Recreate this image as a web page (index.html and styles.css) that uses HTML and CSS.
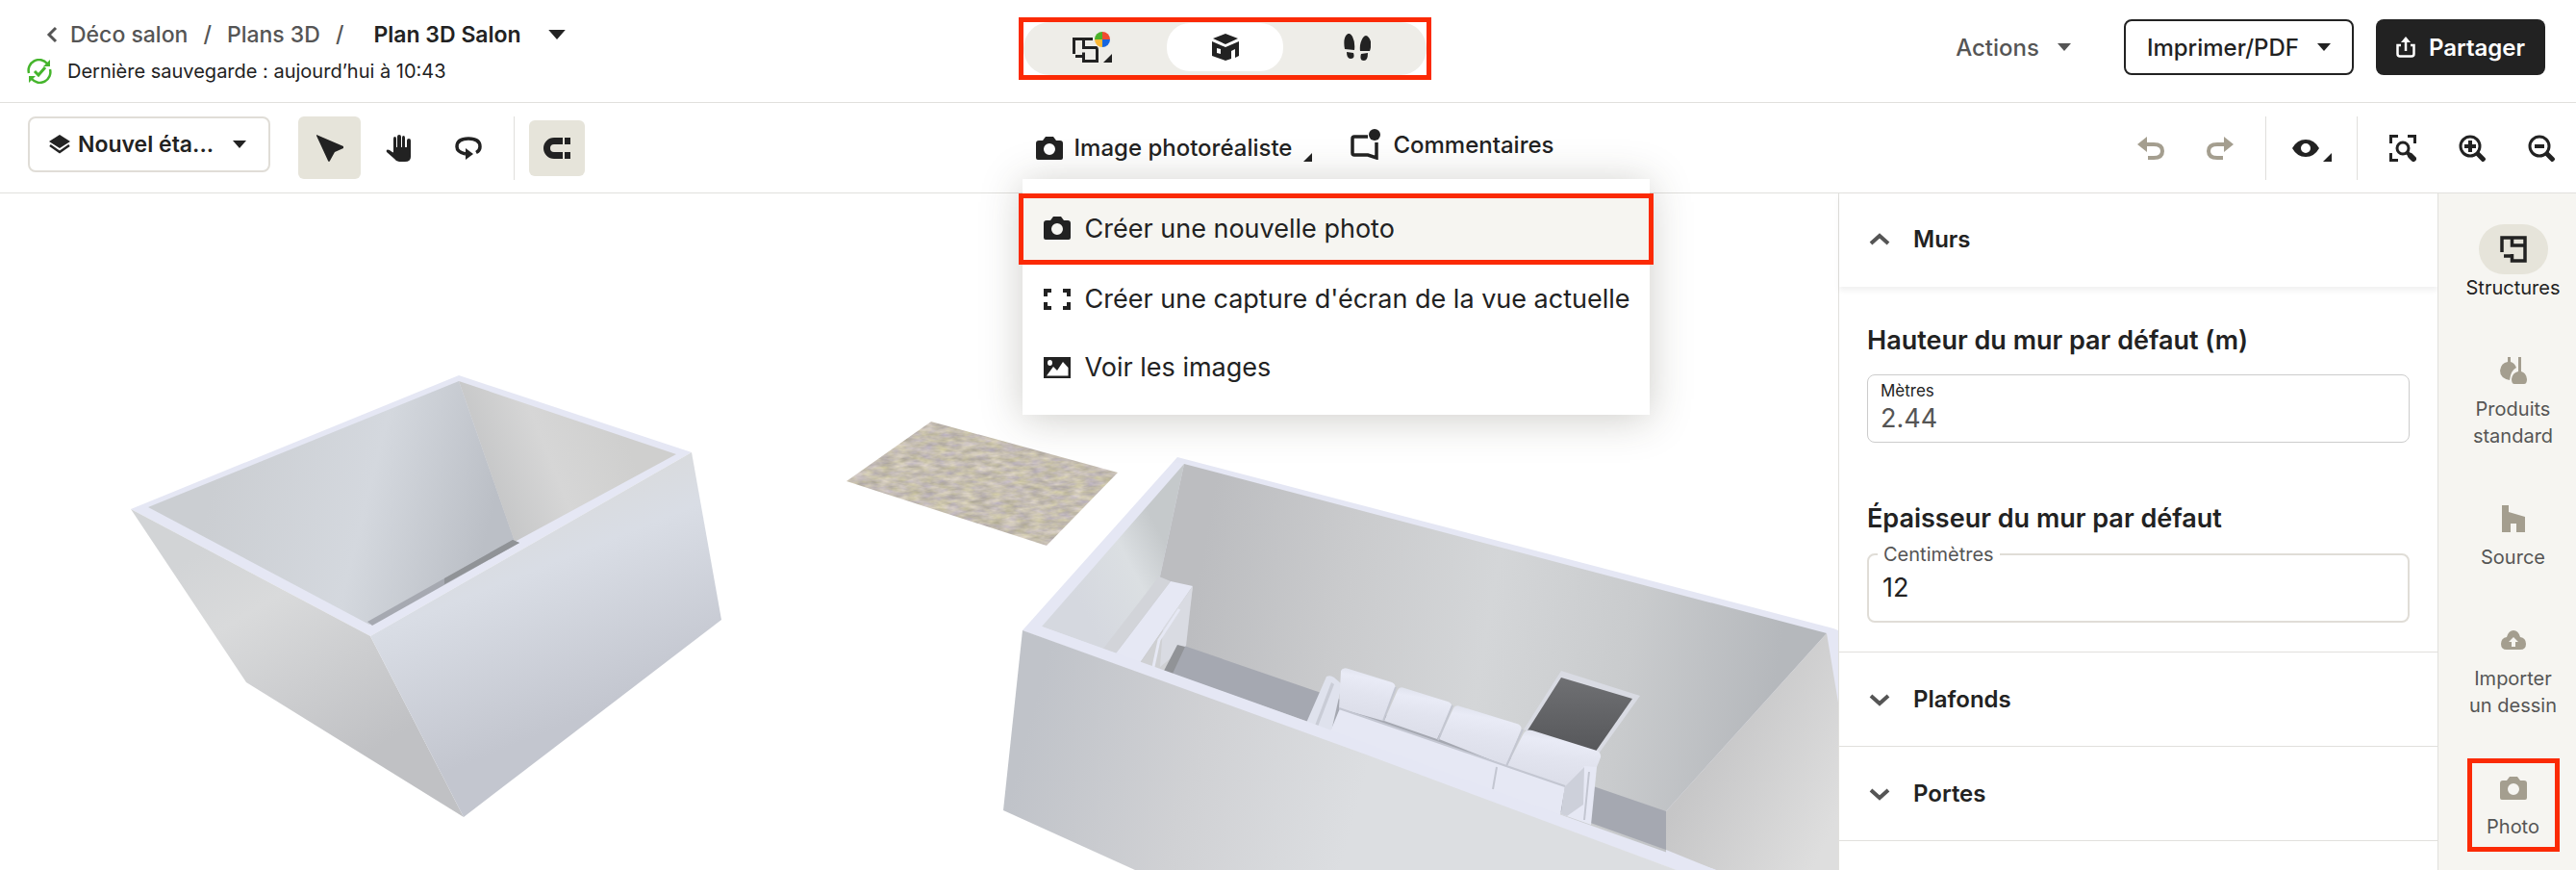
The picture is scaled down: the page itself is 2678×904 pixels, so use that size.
FILE: index.html
```html
<!DOCTYPE html>
<html lang="fr">

<head>
  <meta charset="UTF-8">
  <meta name="viewport" content="width=device-width, initial-scale=1.0">
  <title>Plan 3D Salon</title>
  <link rel="stylesheet" href="styles.css">
</head>

<body>
  <!-- icons -->
  <svg class="sprite" aria-hidden="true">
    <symbol id="i-caret" viewBox="0 0 14 8"><path d="M0 0h14L7 8z"/></symbol>
    <symbol id="i-corner" viewBox="0 0 9 9"><path d="M9 0v9H0z"/></symbol>
    <symbol id="i-back" viewBox="0 0 12 18"><path d="M10 2L3 9l7 7" fill="none" stroke="currentColor" stroke-width="3"/></symbol>
    <symbol id="i-chevron" viewBox="0 0 22 14"><path d="M2 3l9 8 9-8" fill="none" stroke="currentColor" stroke-width="4"/></symbol>
    <symbol id="i-camera" viewBox="0 0 28 24"><path fill-rule="evenodd" d="M10 0h8l3 4h4q3 0 3 3v15q0 2-2 2H2q-2 0-2-2V7q0-3 3-3h4zM14 7a6 6 0 1 0 0 12 6 6 0 1 0 0-12z"/></symbol>
    <symbol id="i-frame" viewBox="0 0 28 22"><path d="M0 0h8v4H4v4H0zM20 0h8v8h-4V4h-4zM0 14h4v4h4v4H0zM24 14h4v8h-8v-4h4z"/></symbol>
    <symbol id="i-picture" viewBox="0 0 28 22"><path fill-rule="evenodd" d="M0 0h28v22H0zM3 19.500h22.500V11L20 5l-6 9-4-4zM6.500 3a2.500 3 0 1 0 0 6 2.500 3 0 1 0 0-6z"/></symbol>
    <symbol id="i-plan" viewBox="0 0 28 28"><path fill="none" stroke="currentColor" stroke-width="3.500" d="M2 17V2h24v24H12.500v-7M4 21h8.500M12.500 2v8h14"/></symbol>
    <symbol id="i-plan-color" viewBox="0 0 42 32">
      <path fill="none" stroke="currentColor" stroke-width="3" d="M1.500 23V7.500H21M11.500 8v8.500h13q1 0 1 3v11h-14v-5M3 25.500h8.500v-4"/>
      <path fill="#4cb22b" d="M31 8V0a8 8 0 0 0-8 8z"/>
      <path fill="#f04b30" d="M31 8h8a8 8 0 0 0-8-8z"/>
      <path fill="#1766e0" d="M31 8v8a8 8 0 0 0 8-8z"/>
      <path fill="#fdb935" d="M31 8h-8a8 8 0 0 0 8 8z"/>
      <path d="M41 23v9h-9z"/>
    </symbol>
    <symbol id="i-cube" viewBox="0 0 28 28">
      <path d="M14 0l13 5-13 6L1 5z"/>
      <path fill-rule="evenodd" d="M0 8l14 6 14-6v15l-4 2v-9l-4 2v8l-6 2-14-5zM5 15v5l4 1v-5z"/>
    </symbol>
    <symbol id="i-feet" viewBox="0 0 28 28">
      <path d="M1 16Q-1 5 3 1q3-3 6 2 3 6 2 14zM3 19l7 1q2 6-3 6-4 0-4-7zM17 18q-1-8 3-14 3-4 6 0 4 5 1 14zM18 21l7-1q0 8-4 8-5 0-3-7z"/>
    </symbol>
    <symbol id="i-share" viewBox="0 0 20 22"><path fill="none" stroke="currentColor" stroke-width="2.500" d="M5 9H1.500v9q0 2.500 2.500 2.500h12q2.500 0 2.500-2.500V9H15M10 15V4"/><path d="M10 0l5 6H5z"/></symbol>
    <symbol id="i-sync" viewBox="0 0 26 26">
      <path fill="none" stroke="currentColor" stroke-width="2.500" d="M2 15A11 11 0 0 1 21 5M24 11A11 11 0 0 1 5 21"/>
      <path d="M24 1v7h-7zM2 25v-7h7z"/>
      <path fill="none" stroke="currentColor" stroke-width="3" d="M8 13l4 4 7-8"/>
    </symbol>
    <symbol id="i-layers" viewBox="0 0 22 20"><path d="M11 0l11 7-11 7L0 7z"/><path fill="none" stroke="currentColor" stroke-width="2.500" d="M1 11l10 7 10-7"/></symbol>
    <symbol id="i-cursor" viewBox="0 0 28 28"><path d="M0 0l28 12q1 1 0 2l-9 4-5 9q-1 2-2 0L0 1z"/></symbol>
    <symbol id="i-hand" viewBox="0 0 28 28">
      <path d="M8 4q0-2 1.500-2T11 4v9h1V2q0-2 2-2t2 2v11h1V3q0-2 1.500-2T20 3v10h2V6q0-2 2-2t2 2v17q0 5-6 5h-6q-3 0-5-3L1 18q-1-2 1-2.500 2 0 4 2l2 1z"/>
    </symbol>
    <symbol id="i-orbit" viewBox="0 0 28 24">
      <path fill="none" stroke="currentColor" stroke-width="3.500" d="M11 18Q2 16 2 10.500 2 2 14 2t12 8.500q0 4-4 6"/>
      <path d="M11 12l8 6-8 6z"/>
    </symbol>
    <symbol id="i-magnet" viewBox="0 0 28 22"><path d="M20 0h-9a11 11 0 0 0 0 22h9v-7h-9a4 4 0 0 1 0-8h9zM22 0h6v7h-6zM22 15h6v7h-6z"/></symbol>
    <symbol id="i-comment" viewBox="0 0 32 32"><path fill="none" stroke="currentColor" stroke-width="3.500" d="M18 8H4q-2 0-2 2v15q0 2 2 2h14l9 3V14"/><circle cx="25" cy="6" r="6"/></symbol>
    <symbol id="i-undo" viewBox="0 0 28 24"><path fill="none" stroke="currentColor" stroke-width="4" d="M9 8h8q9 0 9 7t-9 7h-6"/><path d="M10 0v16L0 8z"/></symbol>
    <symbol id="i-eye" viewBox="0 0 28 18"><path fill-rule="evenodd" d="M0 9q5-9 14-9t14 9q-5 9-14 9T0 9zM14 4a5 5 0 1 0 0 10 5 5 0 1 0 0-10z"/></symbol>
    <symbol id="i-fit" viewBox="0 0 28 28">
      <path d="M0 0h9v3H3v6H0zM19 0h9v9h-3V3h-6zM0 19h3v6h6v3H0z"/>
      <circle cx="14" cy="14" r="6" fill="none" stroke="currentColor" stroke-width="3"/>
      <path fill="none" stroke="currentColor" stroke-width="4" d="M18 18l3 3"/>
      <path fill="none" stroke="currentColor" stroke-width="6" stroke-linecap="round" d="M22 22l3 3"/>
    </symbol>
    <symbol id="i-zoom-in" viewBox="0 0 28 28">
      <circle cx="12" cy="12" r="10" fill="none" stroke="currentColor" stroke-width="3"/>
      <path fill="none" stroke="currentColor" stroke-width="5" d="M19 19l8 8"/>
      <path d="M6 10h4V6h4v4h4v4h-4v4h-4v-4H6z"/>
    </symbol>
    <symbol id="i-zoom-out" viewBox="0 0 28 28">
      <circle cx="12" cy="12" r="10" fill="none" stroke="currentColor" stroke-width="3"/>
      <path fill="none" stroke="currentColor" stroke-width="5" d="M19 19l8 8"/>
      <path d="M7 10h10v4H7z"/>
    </symbol>
    <symbol id="i-lamps" viewBox="0 0 28 28">
      <path d="M8 0h3v5q4 1 6 6-6 3-7 13Q0 22 0 14q1-8 8-9zM19 0h3v15q5 1 6 8 0 5-3 5H15q-3 0-3-5 1-7 7-8z"/>
    </symbol>
    <symbol id="i-house" viewBox="0 0 24 28"><path d="M0 0h7v7l17 5v16h-9v-9H9v9H0z"/></symbol>
    <symbol id="i-cloud" viewBox="0 0 26 20"><path fill-rule="evenodd" d="M6 20q-6 0-6-6t6-7Q8 0 13 0t7 7q6 1 6 7t-6 6zM13 7l-5 5h3v5h4v-5h3z"/></symbol>
  </svg>

  <header class="header">
    <div class="header-left">
      <nav class="breadcrumb">
        <a href="#"><svg width="12" height="18"><use href="#i-back"/></svg>Déco salon</a>
        <span>/</span>
        <a href="#">Plans 3D</a>
        <span>/</span>
        <button class="plan-name">Plan 3D Salon <svg width="18" height="10"><use href="#i-caret"/></svg></button>
      </nav>
      <p class="saved"><svg width="26" height="26"><use href="#i-sync"/></svg>Dernière sauvegarde : aujourd’hui à 10:43</p>
    </div>
    <div class="views marked">
      <div class="views-pill">
        <button aria-label="Vue 2D"><svg width="42" height="32"><use href="#i-plan-color"/></svg></button>
        <button class="active" aria-label="Vue 3D"><svg width="28" height="28"><use href="#i-cube"/></svg></button>
        <button aria-label="Visite"><svg width="28" height="28"><use href="#i-feet"/></svg></button>
      </div>
    </div>
    <div class="header-right">
      <button class="btn btn-text">Actions <svg width="14" height="8"><use href="#i-caret"/></svg></button>
      <button class="btn btn-outline">Imprimer/PDF <svg width="14" height="8"><use href="#i-caret"/></svg></button>
      <button class="btn btn-dark"><svg width="20" height="22"><use href="#i-share"/></svg> Partager</button>
    </div>
  </header>

  <div class="toolbar">
    <div class="tools-left">
      <label class="floor">
        <svg width="22" height="20"><use href="#i-layers"/></svg>
        <select aria-label="Étage">
          <option>Nouvel éta...</option>
        </select>
        <svg width="14" height="8"><use href="#i-caret"/></svg>
      </label>
      <div class="tool-group">
        <button class="tool active" aria-label="Sélection"><svg width="28" height="28"><use href="#i-cursor"/></svg></button>
        <button class="tool" aria-label="Déplacer"><svg width="28" height="28"><use href="#i-hand"/></svg></button>
        <button class="tool" aria-label="Pivoter"><svg width="28" height="24"><use href="#i-orbit"/></svg></button>
      </div>
      <span class="divider"></span>
      <button class="tool tool-small active" aria-label="Magnétisme"><svg width="28" height="22"><use href="#i-magnet"/></svg></button>
    </div>

    <div class="tools-center">
      <div class="dropdown">
        <button class="text-tool"><svg width="28" height="24"><use href="#i-camera"/></svg> Image photoréaliste <svg class="corner" width="9" height="9"><use href="#i-corner"/></svg></button>
        <ul class="menu">
          <li><button class="marked selected"><svg width="28" height="24"><use href="#i-camera"/></svg>Créer une nouvelle photo</button></li>
          <li><button><svg width="28" height="22"><use href="#i-frame"/></svg>Créer une capture d'écran de la vue actuelle</button></li>
          <li><button><svg width="28" height="22"><use href="#i-picture"/></svg>Voir les images</button></li>
        </ul>
      </div>
      <button class="text-tool comments"><svg width="32" height="32"><use href="#i-comment"/></svg> Commentaires</button>
    </div>

    <div class="tools-right">
      <button class="icon-tool muted" aria-label="Annuler"><svg width="28" height="24"><use href="#i-undo"/></svg></button>
      <button class="icon-tool muted" aria-label="Rétablir"><svg class="flip" width="28" height="24"><use href="#i-undo"/></svg></button>
      <span class="divider"></span>
      <button class="icon-tool" aria-label="Affichage"><svg width="28" height="18"><use href="#i-eye"/></svg><svg class="corner" width="9" height="9"><use href="#i-corner"/></svg></button>
      <span class="divider"></span>
      <button class="icon-tool" aria-label="Ajuster"><svg width="28" height="28"><use href="#i-fit"/></svg></button>
      <button class="icon-tool" aria-label="Zoom avant"><svg width="28" height="28"><use href="#i-zoom-in"/></svg></button>
      <button class="icon-tool" aria-label="Zoom arrière"><svg width="28" height="28"><use href="#i-zoom-out"/></svg></button>
    </div>
  </div>

  <main class="workspace">
    <section class="canvas">
      <svg class="scene" viewBox="0 201 1911 703" preserveAspectRatio="xMinYMin slice" role="img" aria-label="Vue 3D">
        <defs>
          <linearGradient id="g-in-left" gradientUnits="userSpaceOnUse" x1="230" y1="470" x2="510" y2="540">
            <stop offset="0" stop-color="#cbced2"/><stop offset=".55" stop-color="#d4d8de"/><stop offset="1" stop-color="#bbbfc6"/>
          </linearGradient>
          <linearGradient id="g-in-right" gradientUnits="userSpaceOnUse" x1="490" y1="490" x2="640" y2="430">
            <stop offset="0" stop-color="#c3c4c5"/><stop offset=".5" stop-color="#d6d6d6"/><stop offset="1" stop-color="#cfcfce"/>
          </linearGradient>
          <linearGradient id="g-out-left" gradientUnits="userSpaceOnUse" x1="230" y1="560" x2="370" y2="790">
            <stop offset="0" stop-color="#d2d4d6"/><stop offset=".3" stop-color="#d9dadb"/><stop offset="1" stop-color="#c0c1c4"/>
          </linearGradient>
          <linearGradient id="g-out-right" gradientUnits="userSpaceOnUse" x1="540" y1="540" x2="620" y2="740">
            <stop offset="0" stop-color="#d9dbde"/><stop offset=".25" stop-color="#d9dde5"/><stop offset="1" stop-color="#c3c6cf"/>
          </linearGradient>
          <linearGradient id="g-back" gradientUnits="userSpaceOnUse" x1="1240" y1="640" x2="1840" y2="740">
            <stop offset="0" stop-color="#bcbdc0"/><stop offset=".25" stop-color="#cacbcd"/><stop offset=".5" stop-color="#d4d6d8"/><stop offset=".75" stop-color="#c9cbcd"/><stop offset="1" stop-color="#b5b8bc"/>
          </linearGradient>
          <linearGradient id="g-side" gradientUnits="userSpaceOnUse" x1="1130" y1="640" x2="1225" y2="590">
            <stop offset="0" stop-color="#d5d8df"/><stop offset=".6" stop-color="#dbdfe2"/><stop offset="1" stop-color="#c5c9cb"/>
          </linearGradient>
          <linearGradient id="g-front" gradientUnits="userSpaceOnUse" x1="1060" y1="790" x2="1400" y2="880">
            <stop offset="0" stop-color="#c0c3c9"/><stop offset=".5" stop-color="#d0d1d4"/><stop offset="1" stop-color="#dcdee1"/>
          </linearGradient>
          <linearGradient id="g-far" gradientUnits="userSpaceOnUse" x1="1770" y1="780" x2="1911" y2="850">
            <stop offset="0" stop-color="#c6c6c7"/><stop offset="1" stop-color="#dedede"/>
          </linearGradient>
          <linearGradient id="g-glass" x1="0" y1="0" x2="0" y2="1">
            <stop offset="0" stop-color="#6f7073"/><stop offset="1" stop-color="#56575a"/>
          </linearGradient>
          <linearGradient id="g-cushion" x1=".6" y1="0" x2=".4" y2="1">
            <stop offset="0" stop-color="#dcdfea"/><stop offset=".2" stop-color="#e9ebf6"/><stop offset=".5" stop-color="#e2e4ef"/><stop offset="1" stop-color="#dbdde8"/>
          </linearGradient>
          <filter id="f-rug" x="0" y="0" width="1" height="1" color-interpolation-filters="sRGB">
            <feTurbulence type="fractalNoise" baseFrequency=".07 .2" numOctaves="3" seed="4"/>
            <feColorMatrix values=".25 .1 0 0 .6  .25 .08 0 0 .58  .1 .25 0 0 .52  0 0 0 0 1"/>
            <feComposite in2="SourceGraphic" operator="in"/>
          </filter>
        </defs>

        <!-- small room -->
        <path fill="#e5e7f4" d="M136 529L477 390l242 80-334 191z"/>
        <path fill="url(#g-in-left)" d="M154 527l323-131 58 166-151 87z"/>
        <path fill="url(#g-in-right)" d="M477 396l226 76-168 91z"/>
        <path fill="#a6a9b1" d="M382 646l151-85 7 3-153 86z"/>
        <path fill="#909397" d="M462 601l71-40 7 3-78 43z"/>
        <path fill="url(#g-out-left)" d="M136 529l249 132 97 188-226-140z"/>
        <path fill="url(#g-out-right)" d="M385 661l334-191 31 174-268 205z"/>

        <!-- rug -->
        <path fill="#c6beae" filter="url(#f-rug)" d="M968 438l194 53-74 76-208-67z"/>

        <!-- living room -->
        <path fill="#e5e7f4" d="M1224 475l682 178 5 2v249h-168l-680-249z"/>
        <path fill="url(#g-side)" d="M1231 482l-148 169 77 28 46-80z"/>
        <path fill="url(#g-back)" d="M1231 482l668 176-167 185v45l-572-209 46-80z"/>
        <path fill="#a5a8b1" d="M1231 671l501 172v40l-372-133-150-53z"/>
        <path fill="url(#g-far)" d="M1899 658l-167 185v40l52 21h127V730z"/>

        <!-- sideboard -->
        <path fill="#d2d4d9" d="M1205 599l12 5-57 75-13-5z"/>
        <path fill="#e6e8f4" d="M1217 604l23 5-55 80-25-10z"/>
        <path fill="#cfd0d3" d="M1240 609l-9 64-21 25-25-9z"/>
        <path fill="#d9dbe2" d="M1240 609l-7 62-27 22 3-40z"/>
        <path fill="none" stroke="#e6e8f4" stroke-width="3" d="M1226 633l-21 32-6 28"/>
        <path fill="#919397" d="M1224 670l8 2-13 28-9-3z"/>

        <!-- window -->
        <path fill="#d9dbe3" d="M1623 697l82 26-43 60-78-25z"/>
        <path fill="url(#g-glass)" d="M1623 704l74 22-39 56-70-23z"/>

        <!-- sofa -->
        <path fill="#dfe2ed" d="M1379 703q4-2 8 1l8 7-11 49-26-9z"/>
        <path fill="#c9ccd6" d="M1384 709l3 2-17 44-3-1z"/>
        <path fill="#e6e8f4" d="M1393 736l234 81-5 30-239-87z"/>
        <path fill="url(#g-cushion)" d="M1394 697q2-4 8-2l45 14q5 2 3 8l-12 32-46-13z"/>
        <path fill="url(#g-cushion)" d="M1453 717q2-4 7-2l45 14q6 2 3 7l-14 32-55-19z"/>
        <path fill="url(#g-cushion)" d="M1511 736q2-4 7-2l59 18q6 2 4 7l-15 37-70-28z"/>
        <path fill="url(#g-cushion)" d="M1584 762q3-5 9-3l64 20q8 2 7 8l-4 10-33 20-61-20z"/>
        <path fill="#e6e8f4" d="M1647 796l13 1-6 60-31-11 4-29z"/>
        <path fill="#cdd0da" d="M1647 797l-1 39-17 12-6-2 4-29z"/>
        <path fill="none" stroke="#c3c6d1" stroke-width="2" d="M1392 736l174 60 61 21M1451 714l-13 35M1510 733l-15 36M1583 758l-17 38M1556 797l-4 23M1652 802l-5 50"/>

        <path fill="#e5e7f4" d="M1063 655l20-4 277 99 261 96 163 58h-41z"/>
        <path fill="url(#g-front)" d="M1063 655l357 129 323 120h-563l-137-62z"/>
      </svg>
    </section>

    <aside class="panel">
      <button class="section-head open"><svg class="up" width="22" height="14"><use href="#i-chevron"/></svg>Murs</button>
      <div class="section-body">
        <h2>Hauteur du mur par défaut (m)</h2>
        <div class="field">
          <label for="height">Mètres</label>
          <input id="height" type="text" value="2.44">
        </div>
        <h2>Épaisseur du mur par défaut</h2>
        <fieldset class="field-outlined">
          <legend><label for="thickness">Centimètres</label></legend>
          <input id="thickness" type="text" value="12">
        </fieldset>
      </div>
      <button class="section-head"><svg width="22" height="14"><use href="#i-chevron"/></svg>Plafonds</button>
      <button class="section-head"><svg width="22" height="14"><use href="#i-chevron"/></svg>Portes</button>
    </aside>

    <nav class="rail">
      <a href="#" class="rail-item active"><span class="rail-icon"><svg width="28" height="28"><use href="#i-plan"/></svg></span>Structures</a>
      <a href="#" class="rail-item"><span class="rail-icon"><svg width="28" height="28"><use href="#i-lamps"/></svg></span>Produits standard</a>
      <a href="#" class="rail-item"><span class="rail-icon"><svg width="24" height="28"><use href="#i-house"/></svg></span>Source</a>
      <a href="#" class="rail-item"><span class="rail-icon"><svg width="26" height="20"><use href="#i-cloud"/></svg></span>Importer un&nbsp;dessin</a>
      <a href="#" class="rail-item rail-marked"><span class="rail-icon"><svg width="28" height="24"><use href="#i-camera"/></svg></span>Photo</a>
    </nav>
  </main>
</body>

</html>
```
FILE: styles.css
```css
* {
  box-sizing: border-box;
}

body {
  display: flex;
  flex-direction: column;
  height: 100vh;
  margin: 0;
  overflow: hidden;
  background: #fff;
  color: #222;
  font-family: Inter, "Liberation Sans", sans-serif;
  font-size: 24px;
}

svg {
  flex: none;
  fill: currentColor;
}

button {
  display: flex;
  align-items: center;
  margin: 0;
  padding: 0;
  border: 0;
  background: none;
  color: inherit;
  font: inherit;
  white-space: nowrap;
  cursor: pointer;
}

a {
  color: inherit;
  text-decoration: none;
}

.sprite {
  position: absolute;
  width: 0;
  height: 0;
}

.marked {
  border: 5px solid #fb2a05;
}

/* header */

.header {
  display: flex;
  align-items: flex-start;
  flex: none;
  height: 107px;
  border-bottom: 1px solid #e1e0dd;
}

.header-left {
  flex: none;
  width: 39.55%;
  padding: 20px 28px 0;
}

.breadcrumb {
  display: flex;
  align-items: center;
  gap: 16px;
  padding-left: 20px;
  line-height: 32px;
  font-size: 23px;
  font-weight: 500;
  color: #555;
}

.breadcrumb a {
  display: flex;
  align-items: center;
  gap: 13px;
}

.plan-name {
  gap: 28px;
  padding-left: 15px;
  color: #222;
  font-weight: 600;
}

.saved {
  display: flex;
  align-items: center;
  gap: 16px;
  margin: 6px 0 0;
  font-size: 20px;
  line-height: 32px;
}

.saved svg {
  color: #45b52c;
}

.views {
  width: 429px;
  height: 65px;
  margin-top: 18px;
  overflow: hidden;
}

.views-pill {
  display: flex;
  gap: 16px;
  height: 55px;
  padding: 1px 11px 4px;
  border-radius: 32px;
  background: #eeede8;
}

.views-pill button {
  flex: 1;
  justify-content: center;
  border-radius: 24px;
}

.views-pill .active {
  background: #fff;
}

.header-right {
  display: flex;
  flex: 1;
  justify-content: flex-end;
  gap: 23px;
  padding: 20px 32px 0 0;
}

.btn {
  gap: 19px;
  height: 58px;
  padding: 0 22px;
  border: 2px solid transparent;
  border-radius: 8px;
  font-weight: 500;
}

.btn-text {
  padding: 0 30px;
  color: #555;
}

.btn-outline {
  border-color: #222;
}

.btn-dark {
  gap: 14px;
  padding: 0 19px;
  background: #222;
  color: #fff;
  font-weight: 600;
}

/* toolbar */

.toolbar {
  display: flex;
  flex: none;
  height: 94px;
  padding-top: 14px;
  border-bottom: 1px solid #e1e0dd;
}

.tools-left {
  display: flex;
  flex: none;
  width: 40.2%;
  padding-left: 29px;
}

.floor {
  display: flex;
  align-items: center;
  gap: 8px;
  width: 252px;
  height: 58px;
  margin-right: 29px;
  padding: 0 23px 0 20px;
  border: 2px solid #e0ddd7;
  border-radius: 8px;
}

.floor select {
  flex: 1;
  min-width: 0;
  padding: 0;
  border: 0;
  background: none;
  color: inherit;
  font: inherit;
  font-size: 23px;
  font-weight: 600;
  appearance: none;
}

.tool-group {
  display: flex;
  gap: 7px;
}

.tool {
  justify-content: center;
  width: 65px;
  height: 65px;
  border-radius: 6px;
}

.tool.active {
  background: #e6e4da;
}

.tool-small {
  width: 58px;
  height: 58px;
  margin-top: 4px;
}

.divider {
  width: 1px;
  height: 66px;
  margin: 0 11px;
  background: #e0dfdc;
}

.tools-left .divider {
  margin: 0 15px;
}

.tools-center {
  display: flex;
  align-items: flex-start;
  gap: 40px;
}

.dropdown {
  position: relative;
  display: flex;
}

.text-tool {
  gap: 12px;
  height: 65px;
  font-weight: 500;
}

.comments {
  height: 58px;
}

.corner {
  align-self: flex-end;
  margin-bottom: 18px;
}

.menu {
  position: absolute;
  z-index: 10;
  top: 100%;
  left: -14px;
  width: 652px;
  margin: 0;
  padding: 15px 0 14px;
  background: #fff;
  box-shadow: 0 4px 40px rgba(60, 55, 40, 0.25);
  list-style: none;
}

.menu button {
  gap: 15px;
  width: 100%;
  height: 71px;
  padding: 0 22px;
  font-size: 27px;
}

.menu .marked {
  width: auto;
  height: 74px;
  margin: 0 -4px;
  padding: 0 21px 2px;
}

.menu li:first-child {
  display: grid;
}

.menu .selected {
  background: #f6f5f1;
}

.tools-right {
  display: flex;
  flex: 1;
  justify-content: flex-end;
}

.icon-tool {
  justify-content: center;
  gap: 4px;
  width: 72px;
  height: 65px;
}

.icon-tool.muted {
  color: #a49e8f;
}

.flip {
  transform: scaleX(-1);
}

/* workspace */

.workspace {
  display: flex;
  flex: 1;
  min-height: 0;
}

.canvas {
  flex: 1;
  min-width: 0;
}

.scene {
  display: block;
  width: 100%;
  height: 100%;
}

.panel {
  flex: none;
  width: 623px;
  border-left: 1px solid #e1e0dd;
  background: #fff;
}

.section-head {
  gap: 24px;
  width: 100%;
  height: 98px;
  padding: 0 31px;
  border-bottom: 1px solid #e1e0dd;
  font-weight: 600;
}

.section-head svg {
  color: #555;
}

.section-head.open {
  height: 97px;
  padding-bottom: 2px;
  border-bottom: 0;
  box-shadow: 0 4px 6px rgba(0, 0, 0, 0.06);
}

.section-head .up {
  transform: rotate(180deg);
}

.section-body {
  padding: 36px 29px 30px;
  border-bottom: 1px solid #e1e0dd;
}

.section-body h2 {
  margin: 0 0 15px;
  font-size: 27px;
  font-weight: 600;
  line-height: 40px;
}

.field {
  display: flex;
  flex-direction: column;
  height: 71px;
  margin-bottom: 59px;
  padding: 6px 13px;
  border: 1px solid #ccc;
  border-radius: 8px;
}

.field label {
  font-size: 17px;
  line-height: 21px;
}

.field input,
.field-outlined input {
  width: 100%;
  padding: 0;
  border: 0;
  outline: 0;
  background: none;
  font: inherit;
  font-size: 27px;
  line-height: 36px;
}

.field input {
  color: #555;
}

.field-outlined {
  height: 84px;
  margin: -11px 0 0;
  padding: 4px 14px 0;
  border: 2px solid #e0ddd7;
  border-radius: 8px;
}

.field-outlined legend {
  margin-left: -5px;
  padding: 0 6px;
  color: #555;
  font-size: 20px;
  line-height: 26px;
}

.field-outlined input {
  color: #222;
}

/* right rail */

.rail {
  display: flex;
  flex: none;
  flex-direction: column;
  align-items: center;
  gap: 46px;
  width: 144px;
  padding: 32px 0 0 12px;
  border-left: 1px solid #e1e0dd;
  background: #f6f5f1;
}

.rail-item {
  display: flex;
  flex: none;
  flex-direction: column;
  align-items: center;
  width: 110px;
  color: #555;
  font-size: 20px;
  line-height: 28px;
  text-align: center;
}

.rail-item.active {
  color: #222;
}

.rail-icon {
  display: flex;
  align-items: center;
  justify-content: center;
  width: 72px;
  height: 52px;
  border-radius: 26px;
  color: #a49e8f;
}

.rail-item.active .rail-icon {
  background: #e6e4da;
  color: #222;
}

.rail-marked {
  width: 86px;
  padding-bottom: 7px;
  outline: 5px solid #fb2a05;
}
```
